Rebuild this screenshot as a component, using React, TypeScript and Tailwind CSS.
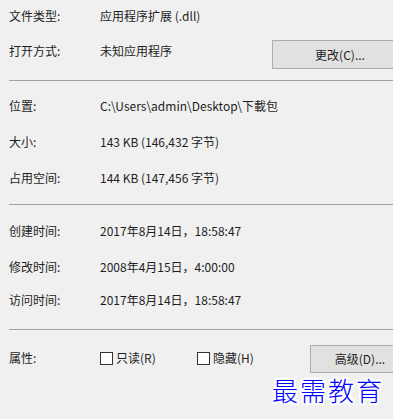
export default function App() {
    const font = { fontFamily: '"Microsoft YaHei", "Noto Sans CJK SC", sans-serif' };

    return (
        <div
            className="relative w-[393px] h-[419px] overflow-hidden bg-[#f0f0f0] text-[12px] text-[#1e1e1e]"
            style={font}
        >
            <div className="flex flex-col pl-[9px]">
                {/* Type / open with */}
                <div className="flex items-center h-[32px]">
                    <span className="w-[91px]">文件类型:</span>
                    <span>应用程序扩展 (.dll)</span>
                </div>
                <div className="flex items-center h-[38px]">
                    <span className="w-[91px]">打开方式:</span>
                    <span className="flex-1">未知应用程序</span>
                    <div className="flex items-center justify-center w-[136px] h-[29px] mt-[7px] -mr-[15px] border border-[#adadad] bg-[#e1e1e1]">
                        更改(C)...
                    </div>
                </div>
                <div className="mt-[10px] h-px bg-[#a0a0a0]" />

                {/* Location / size */}
                <div className="pt-[7px]">
                    <div className="flex items-center h-[36px]">
                        <span className="w-[91px]">位置:</span>
                        <span>C:\Users\admin\Desktop\下載包</span>
                    </div>
                    <div className="flex items-center h-[36px]">
                        <span className="w-[91px]">大小:</span>
                        <span>143 KB (146,432 字节)</span>
                    </div>
                    <div className="flex items-center h-[36px]">
                        <span className="w-[91px]">占用空间:</span>
                        <span>144 KB (147,456 字节)</span>
                    </div>
                </div>
                <div className="mt-[8px] h-px bg-[#a0a0a0]" />

                {/* Times */}
                <div className="pt-[8px]">
                    <div className="flex items-center h-[36px]">
                        <span className="w-[91px]">创建时间:</span>
                        <span>2017年8月14日，18:58:47</span>
                    </div>
                    <div className="flex items-center h-[36px]">
                        <span className="w-[91px]">修改时间:</span>
                        <span>2008年4月15日，4:00:00</span>
                    </div>
                    <div className="flex items-center h-[30px]">
                        <span className="w-[91px]">访问时间:</span>
                        <span>2017年8月14日，18:58:47</span>
                    </div>
                </div>
                <div className="mt-[14px] h-px bg-[#a0a0a0]" />

                {/* Attributes */}
                <div className="flex items-center h-[28px] mt-[14px]">
                    <span className="w-[91px]">属性:</span>
                    <label className="flex items-center w-[97px]">
                        <span className="w-[13px] h-[13px] border border-[#333] bg-white mr-[3px]" />
                        只读(R)
                    </label>
                    <label className="flex items-center flex-1">
                        <span className="w-[13px] h-[13px] border border-[#333] bg-white mr-[3px]" />
                        隐藏(H)
                    </label>
                    <div className="flex items-center justify-center w-[100px] h-[28px] mt-[2px] -mr-[17px] border border-[#adadad] bg-[#e1e1e1]">
                        高级(D)...
                    </div>
                </div>
            </div>

            {/* Watermark */}
            <div
                className="absolute left-[272px] top-[375px] text-[26px] font-light leading-[30px] tracking-[2px] text-[#0000ff]"
                style={{
                    fontFamily: '"KaiTi", "Noto Sans CJK SC", serif',
                    textShadow:
                        "2px 0 #fff, -2px 0 #fff, 0 2px #fff, 0 -2px #fff, 2px 2px #fff, -2px -2px #fff, 2px -2px #fff, -2px 2px #fff",
                }}
            >
                最需教育
            </div>
        </div>
    );
}
